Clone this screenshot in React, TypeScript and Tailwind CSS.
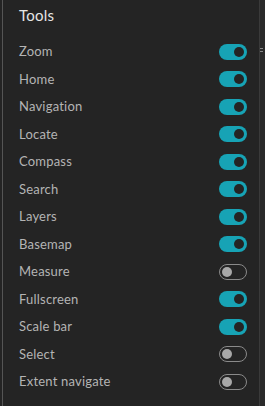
import React from "react";

const tools: [string, boolean][] = [
  ["Zoom", true],
  ["Home", true],
  ["Navigation", true],
  ["Locate", true],
  ["Compass", true],
  ["Search", true],
  ["Layers", true],
  ["Basemap", true],
  ["Measure", false],
  ["Fullscreen", true],
  ["Scale bar", true],
  ["Select", false],
  ["Extent navigate", false],
];

function Toggle({ on }: { on: boolean }) {
  return on ? (
    <div className="w-[28px] h-[16px] rounded-full bg-[#17a3b5] flex items-center justify-end pr-[3px]">
      <div className="w-[10px] h-[10px] rounded-full bg-[#242424]" />
    </div>
  ) : (
    <div className="w-[28px] h-[16px] rounded-full border border-[#8a8a8a] bg-[#242424] flex items-center justify-start pl-[2px]">
      <div className="w-[10px] h-[10px] rounded-full bg-[#a8a8a8]" />
    </div>
  );
}

export default function App() {
  return (
    <div
      className="w-[265px] h-[406px] bg-[#2a2a2a] flex overflow-hidden"
      style={{ fontFamily: "Lato, 'Open Sans', sans-serif" }}
    >
      <div className="w-[2px] bg-[#242424]" />
      <div className="w-[258px] h-full bg-[#242424] border-l border-[#555555] border-r border-r-[#3a3a3a] flex flex-col">
        <div className="pl-[16px] pt-[4px] h-[33px] text-[15px] text-[#e6e6e6] leading-[22px] tracking-[0.2px]">Tools</div>
        <div className="flex flex-col pt-[5px]">
          {tools.map(([name, on]) => (
            <div key={name} className="h-[27.5px] flex items-center justify-between pl-[16px] pr-[12px]">
              <span className="text-[13px] text-[#b4b4b4] tracking-[0.2px]">{name}</span>
              <Toggle on={on} />
            </div>
          ))}
        </div>
      </div>
      <div className="relative flex-1">
        <div className="absolute left-0 top-[48px] w-[3px] h-[4px] border-t border-b border-[#888]" />
      </div>
    </div>
  );
}
